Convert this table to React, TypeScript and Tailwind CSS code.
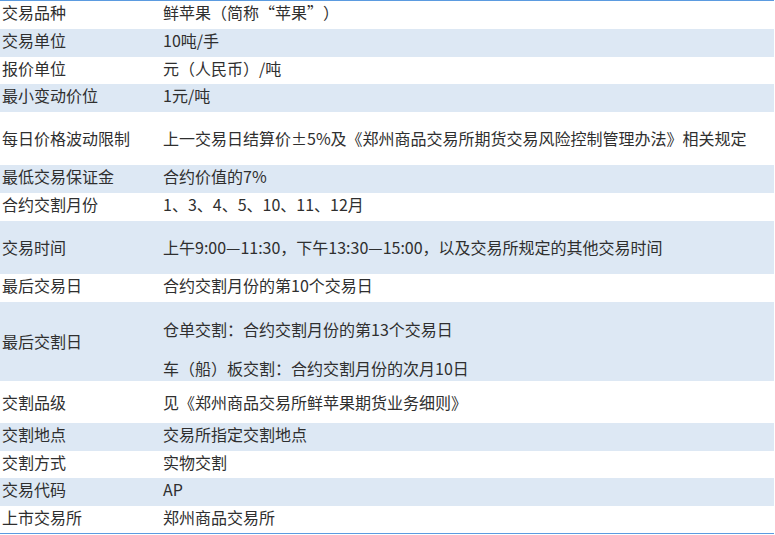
const rows: { label: string; value: string[]; h: string; blue: boolean; tall?: boolean }[] = [
  { label: "交易品种", value: ["鲜苹果（简称“苹果”）"], h: "h-[28px]", blue: false },
  { label: "交易单位", value: ["10吨/手"], h: "h-[28px]", blue: true },
  { label: "报价单位", value: ["元（人民币）/吨"], h: "h-[27px]", blue: false },
  { label: "最小变动价位", value: ["1元/吨"], h: "h-[28px]", blue: true },
  {
    label: "每日价格波动限制",
    value: ["上一交易日结算价±5%及《郑州商品交易所期货交易风险控制管理办法》相关规定"],
    h: "h-[53px]",
    blue: false,
    tall: true,
  },
  { label: "最低交易保证金", value: ["合约价值的7%"], h: "h-[28px]", blue: true },
  { label: "合约交割月份", value: ["1、3、4、5、10、11、12月"], h: "h-[28px]", blue: false },
  {
    label: "交易时间",
    value: ["上午9:00—11:30，下午13:30—15:00，以及交易所规定的其他交易时间"],
    h: "h-[53px]",
    blue: true,
    tall: true,
  },
  { label: "最后交易日", value: ["合约交割月份的第10个交易日"], h: "h-[28px]", blue: false },
  {
    label: "最后交割日",
    value: ["仓单交割：合约交割月份的第13个交易日", "车（船）板交割：合约交割月份的次月10日"],
    h: "h-[79px]",
    blue: true,
    tall: true,
  },
  {
    label: "交割品级",
    value: ["见《郑州商品交易所鲜苹果期货业务细则》"],
    h: "h-[42px]",
    blue: false,
    tall: true,
  },
  { label: "交割地点", value: ["交易所指定交割地点"], h: "h-[28px]", blue: true },
  { label: "交割方式", value: ["实物交割"], h: "h-[27px]", blue: false },
  { label: "交易代码", value: ["AP"], h: "h-[28px]", blue: true },
  { label: "上市交易所", value: ["郑州商品交易所"], h: "h-[27px]", blue: false },
];

export default function App() {
  return (
    <div
      className="w-[775px] h-[535px] bg-white text-[16px] leading-[22px] text-[#2f2f2f] [text-spacing-trim:space-all]"
      style={{ fontFamily: '"Noto Sans CJK SC", "Noto Sans", sans-serif' }}
    >
      <div className="w-[774px] border-t border-b border-[#5b9be0]">
        {rows.map((r) => (
          <div
            key={r.label}
            className={`grid grid-cols-[161px_1fr] ${r.h} ${r.blue ? "bg-[#dde8f4]" : "bg-white"}`}
          >
            <div className={`flex items-center pl-[2px] ${r.tall ? "pb-[1px]" : "pb-[6px]"}`}>
              {r.label}
            </div>
            {r.value.length > 1 ? (
              <div className="flex flex-col gap-[17px] pl-[2px] pt-[16px]">
                {r.value.map((v) => (
                  <p key={v}>{v}</p>
                ))}
              </div>
            ) : (
              <div className={`flex items-center pl-[2px] ${r.tall ? "pb-[1px]" : "pb-[6px]"}`}>
                {r.value[0]}
              </div>
            )}
          </div>
        ))}
      </div>
    </div>
  );
}
